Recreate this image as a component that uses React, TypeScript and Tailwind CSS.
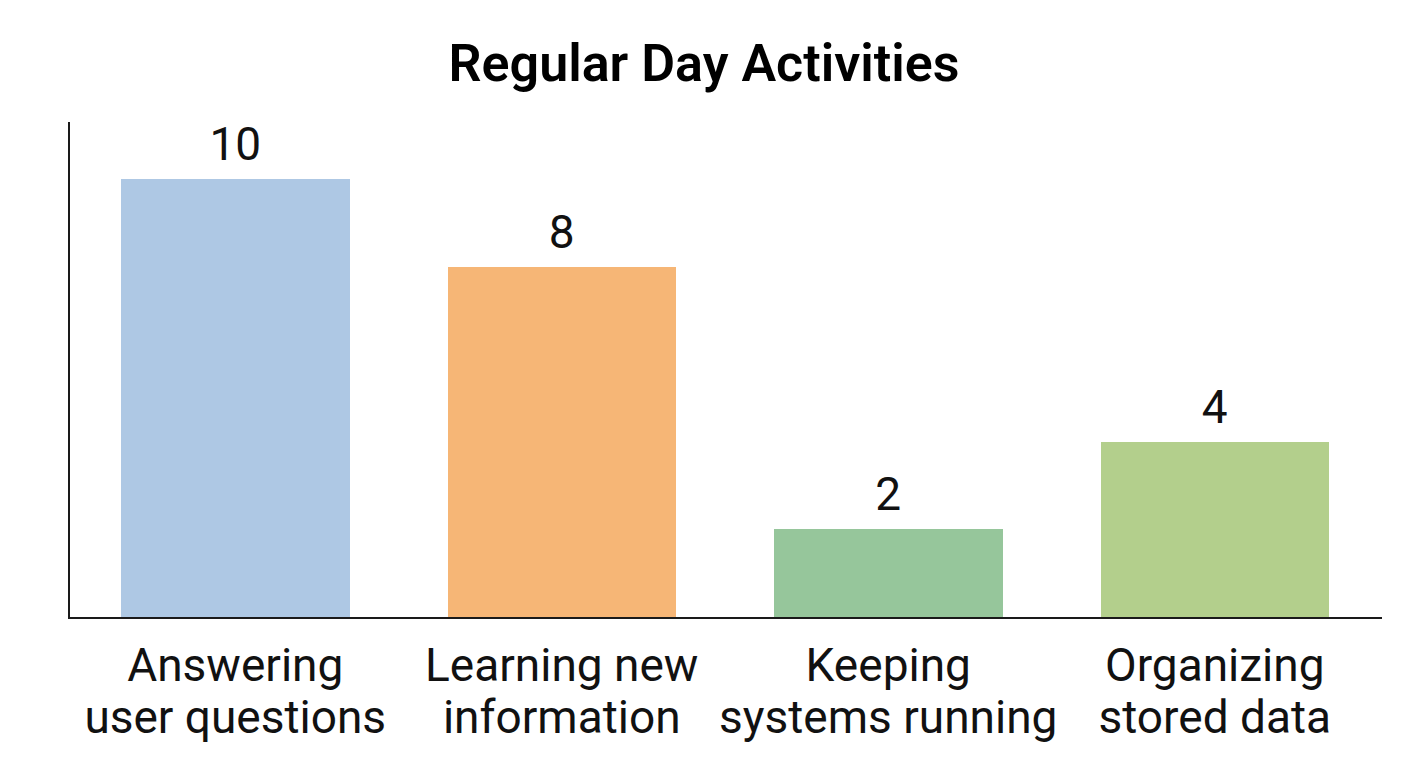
import React from 'react'

const activities = [
  { label: ['Answering', 'user questions'], value: 10, color: 'bg-[#aec8e4]' },
  { label: ['Learning new', 'information'], value: 8, color: 'bg-[#f6b676]' },
  { label: ['Keeping', 'systems running'], value: 2, color: 'bg-[#96c69b]' },
  { label: ['Organizing', 'stored data'], value: 4, color: 'bg-[#b3cf8c]' },
]

// px per unit on the y scale
const UNIT = 43.8

function Bar({ value, color }: { value: number; color: string }) {
  return (
    <div className="w-[228.5px] flex flex-col items-center justify-end">
      <span className="text-[46px] leading-none mb-[12px] text-[#111]">{value}</span>
      <div className={`w-full ${color}`} style={{ height: value * UNIT }} />
    </div>
  )
}

export default function App() {
  return (
    <div
      className="w-[1408px] h-[768px] bg-white text-black flex flex-col"
      style={{ fontFamily: 'Roboto, "Open Sans", sans-serif' }}
    >
      <h1 className="h-[122px] pt-[38px] text-center text-[52px] leading-none font-semibold">
        Regular Day Activities
      </h1>

      <div className="ml-[68px] mr-[26px] h-[497px] border-l-2 border-b-2 border-[#1a1a1a] flex items-end gap-[98px] pl-[51px]">
        {activities.map((a) => (
          <Bar key={a.value} value={a.value} color={a.color} />
        ))}
      </div>

      <div className="flex gap-[98px] pl-[121px] pt-[20px]">
        {activities.map((a) => (
          <div
            key={a.value}
            className="w-[228.5px] flex flex-col items-center text-[46px] leading-[52px] whitespace-nowrap text-[#111]"
          >
            <span>{a.label[0]}</span>
            <span>{a.label[1]}</span>
          </div>
        ))}
      </div>
    </div>
  )
}
